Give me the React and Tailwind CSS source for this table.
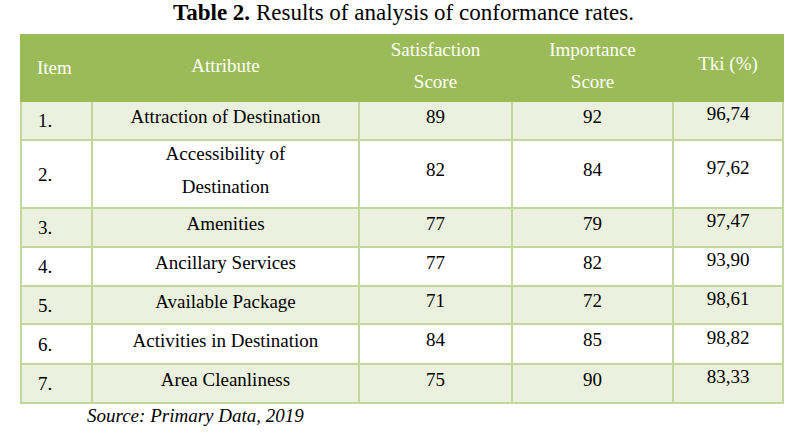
import React from "react";

const rows = [
  { n: "1.", a: "Attraction of Destination", s: "89", i: "92", t: "96,74" },
  { n: "2.", a: ["Accessibility of", "Destination"], s: "82", i: "84", t: "97,62" },
  { n: "3.", a: "Amenities", s: "77", i: "79", t: "97,47" },
  { n: "4.", a: "Ancillary Services", s: "77", i: "82", t: "93,90" },
  { n: "5.", a: "Available Package", s: "71", i: "72", t: "98,61" },
  { n: "6.", a: "Activities in Destination", s: "84", i: "85", t: "98,82" },
  { n: "7.", a: "Area Cleanliness", s: "75", i: "90", t: "83,33" },
];

export default function App() {
  return (
    <div className="w-[807px] h-[435px] bg-white text-black font-['Liberation_Serif',serif] overflow-hidden">
      <div className="h-[34px] pt-[1px] text-center text-[23px] leading-[24px]">
        <span className="font-bold">Table 2.</span> Results of analysis of conformance rates.
      </div>

      <div className="ml-[20px] w-[764px] h-[68px] bg-[#9bbb59] px-[2px] grid grid-cols-[69px_265px_151px_159px_108px] gap-x-[2px] text-white text-[19px] leading-[32px]">
        <div className="flex items-center pl-[15px] pb-[5px]">Item</div>
        <div className="flex items-center justify-center pb-[9px]">Attribute</div>
        <div className="flex items-center justify-center text-center pb-[9px]">
          <div>Satisfaction<br />Score</div>
        </div>
        <div className="flex items-center justify-center text-center pb-[9px]">
          <div>Importance<br />Score</div>
        </div>
        <div className="flex items-center justify-center pb-[13px]">Tki (%)</div>
      </div>

      <div className="ml-[20px] w-[764px] bg-[#c3d69b] px-[2px] pb-[2px] grid grid-cols-[69px_265px_151px_159px_108px] grid-rows-[37px_66px_37px_37px_36px_38px_37px] gap-[2px] text-[19px] leading-[33px]">
        {rows.map((r, idx) => {
          const bg = idx % 2 === 0 ? "bg-[#ebf1de]" : "bg-white";
          return (
            <React.Fragment key={r.n}>
              <div className={`${bg} flex items-center pl-[16px]`}>{r.n}</div>
              <div className={`${bg} flex items-center justify-center text-center pb-[8px]`}>
                {Array.isArray(r.a) ? (
                  <div>
                    {r.a[0]}
                    <br />
                    {r.a[1]}
                  </div>
                ) : (
                  r.a
                )}
              </div>
              <div className={`${bg} flex items-center justify-center pb-[9px]`}>{r.s}</div>
              <div className={`${bg} flex items-center justify-center pb-[9px]`}>{r.i}</div>
              <div className={`${bg} flex items-center justify-center pb-[14px]`}>{r.t}</div>
            </React.Fragment>
          );
        })}
      </div>

      <div className="ml-[87px] mt-[2px] italic text-[19px] leading-[20px]">Source: Primary Data, 2019</div>
    </div>
  );
}
